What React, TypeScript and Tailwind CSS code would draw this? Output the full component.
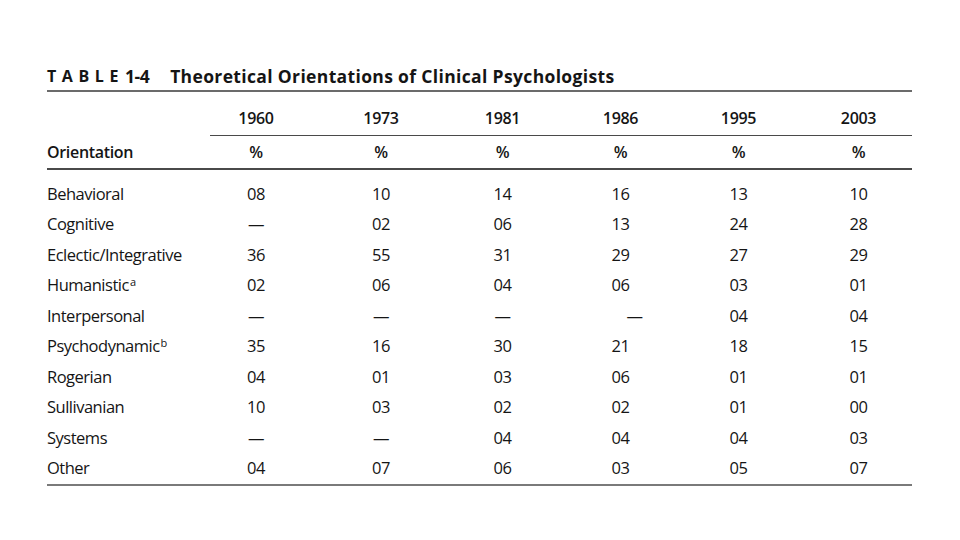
const years = ['1960', '1973', '1981', '1986', '1995', '2003'];

type Row = { name: string; sup?: string; values: string[] };

const rows: Row[] = [
  { name: 'Behavioral', values: ['08', '10', '14', '16', '13', '10'] },
  { name: 'Cognitive', values: ['—', '02', '06', '13', '24', '28'] },
  { name: 'Eclectic/Integrative', values: ['36', '55', '31', '29', '27', '29'] },
  { name: 'Humanistic', sup: 'a', values: ['02', '06', '04', '06', '03', '01'] },
  { name: 'Interpersonal', values: ['—', '—', '—', '—', '04', '04'] },
  { name: 'Psychodynamic', sup: 'b', values: ['35', '16', '30', '21', '18', '15'] },
  { name: 'Rogerian', values: ['04', '01', '03', '06', '01', '01'] },
  { name: 'Sullivanian', values: ['10', '03', '02', '02', '01', '00'] },
  { name: 'Systems', values: ['—', '—', '04', '04', '04', '03'] },
  { name: 'Other', values: ['04', '07', '06', '03', '05', '07'] },
];

// column centres follow the printed table (256, 382, 504, 620, 737, 858)
const cols = 'grid grid-cols-[146px_126px_124px_119px_117px_119px_121px] items-center';

export default function App() {
  return (
    <div className="h-[540px] w-[960px] bg-white pl-[47px] pt-[62px] font-['Open_Sans',sans-serif] text-[#151515]">
      <div className="w-[865px]">
        {/* title */}
        <div className="flex h-[28px] items-center font-bold">
          <span className="text-[16px] tracking-[0.35em]">TABLE</span>
          <span className="ml-[1px] text-[17.5px] tracking-[-0.03em]">1-4</span>
          <span className="ml-[21px] text-[17.5px] tracking-[0.02em]">Theoretical Orientations of Clinical Psychologists</span>
        </div>
        <div className="h-[1.5px] bg-[#6b6b6b]" />

        {/* year header */}
        <div className={`${cols} mt-[12px] h-[28px] text-[16px] font-semibold tracking-[-0.02em]`}>
          <div />
          {years.map((y) => (
            <div key={y} className="text-center">
              {y}
            </div>
          ))}
        </div>
        <div className="mt-[3px] ml-[163px] h-[1.5px] bg-[#4a4a4a]" />

        <div className={`${cols} h-[32px] text-[16px] font-semibold tracking-[-0.02em]`}>
          <div>Orientation</div>
          {years.map((y) => (
            <div key={y} className="text-center">
              %
            </div>
          ))}
        </div>
        <div className="h-[1.5px] bg-[#4a4a4a]" />

        {/* body */}
        <div className="pt-[9.5px] text-[16.5px] tracking-[-0.03em]">
          {rows.map((r) => (
            <div key={r.name} className={`${cols} h-[30.5px]`}>
              <div>
                {r.name}
                {r.sup && <sup className="ml-[1px] text-[11px]">{r.sup}</sup>}
              </div>
              {r.values.map((v, i) => (
                <div
                  key={i}
                  className={`text-center ${r.name === 'Interpersonal' && i === 3 ? 'pl-[28px]' : ''}`}
                >
                  {v}
                </div>
              ))}
            </div>
          ))}
        </div>
        <div className="h-[1.5px] bg-[#7a7a7a]" />
      </div>
    </div>
  );
}
